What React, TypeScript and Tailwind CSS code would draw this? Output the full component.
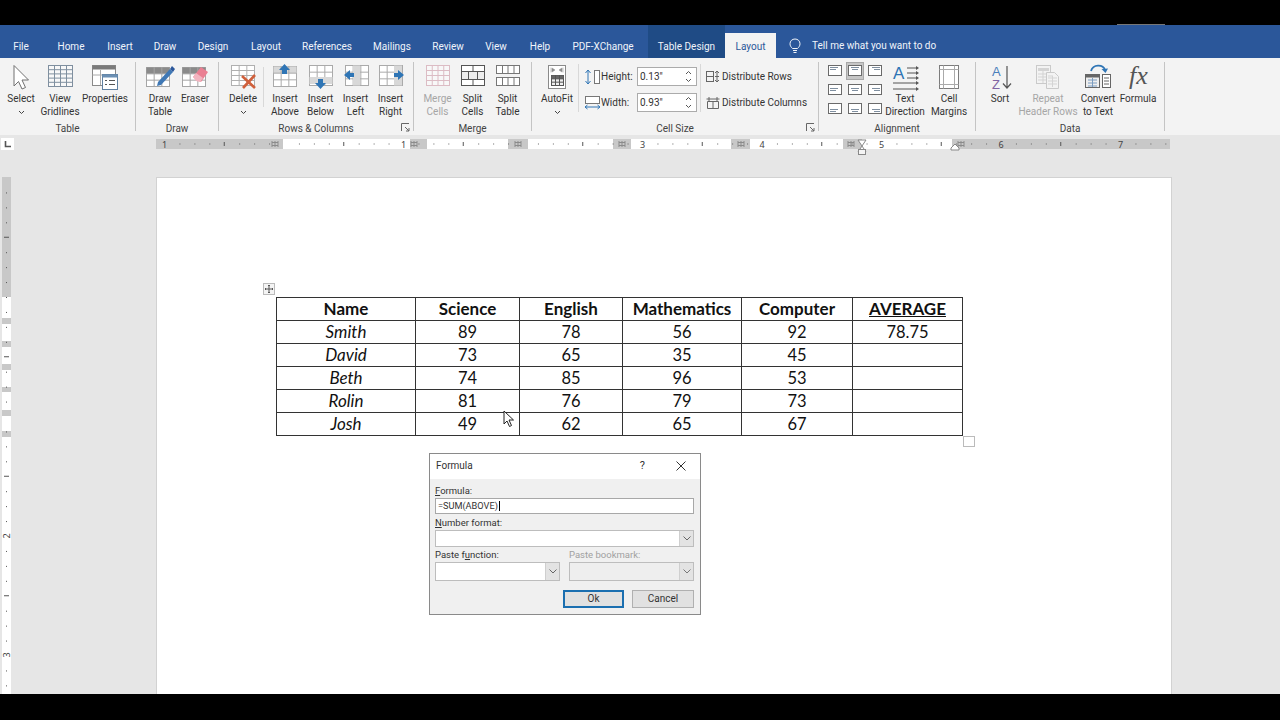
import React from "react";

const UI = { fontFamily: 'Roboto, "Noto Sans", sans-serif' };

function Grid({ x, y, w, h, cols, rows, c = "#7f8a93", fill = "#fff", head }: { x: number; y: number; w: number; h: number; cols: number; rows: number; c?: string; fill?: string; head?: string }) {
  const v = Array.from({ length: cols - 1 }, (_, i) => x + ((i + 1) * w) / cols);
  const hz = Array.from({ length: rows - 1 }, (_, i) => y + ((i + 1) * h) / rows);
  return (
    <g stroke={c} strokeWidth="1" fill="none">
      <rect x={x + 0.5} y={y + 0.5} width={w} height={h} fill={fill} />
      {head && <rect x={x + 0.5} y={y + 0.5} width={w} height={h / rows} fill={head} stroke="none" />}
      {v.map((p) => <path key={p} d={`M${p + 0.5} ${y}v${h}`} />)}
      {hz.map((p) => <path key={p} d={`M${x} ${p + 0.5}h${w}`} />)}
    </g>
  );
}

const Ico = ({ w = 28, h = 28, children }: { w?: number; h?: number; children: React.ReactNode }) => (
  <svg width={w} height={h} viewBox={`0 0 ${w} ${h}`} className="block shrink-0 overflow-visible">{children}</svg>
);

const icons: Record<string, React.ReactNode> = {
  select: <Ico><path d="M7 1.5 L7 22 L11.5 17.5 L15 25 L18.5 23.5 L15 16 L21.5 16 Z" fill="#fff" stroke="#707070" /></Ico>,
  gridlines: <Ico><Grid x={2} y={1} w={24} h={21} cols={4} rows={5} c="#7f8f9f" fill="#f8f8f8" /></Ico>,
  properties: <Ico><g><rect x="1.5" y="1.5" width="23" height="20" fill="#fff" stroke="#8a8a8a" /><rect x="1.5" y="1.5" width="23" height="4" fill="#7a7a7a" /><path d="M1.5 11h12M9.5 6v15" stroke="#aaa" /><rect x="11.5" y="10.5" width="15" height="15" fill="#fff" stroke="#5f7f9f" /><rect x="11.5" y="10.5" width="15" height="3" fill="#6b8fb3" /><path d="M14 16.5h2M18 16.5h6M14 20.5h2M18 20.5h6" stroke="#555" /></g></Ico>,
  draw: <Ico w={30}><Grid x={1} y={3} w={23} h={19} cols={3} rows={3} c="#a5a5a5" head="#8a8a8a" /><path d="M13 18 L25 5 L28 8 L16 21 L12 22 Z" fill="#3f78b5" /><path d="M25 5 L27 2 L30 5 L28 8 Z" fill="#2b579a" /></Ico>,
  eraser: <Ico><Grid x={1} y={3} w={23} h={19} cols={3} rows={3} c="#a5a5a5" head="#8a8a8a" /><path d="M12 13 L20 3 L27 8 L20 18 Z" fill="#ea7f92" /><path d="M12 13 L15 9 L22 14 L19 18 L15 17 Z" fill="#f2b4bf" /></Ico>,
  delete: <Ico><Grid x={2} y={1} w={23} h={20} cols={3} rows={4} c="#b0b0b0" /><path d="M13 12 L26 24 M26 11 L14 24" stroke="#d0603c" strokeWidth="2.6" /></Ico>,
  above: <Ico><Grid x={2} y={2} w={23} h={20} cols={3} rows={3} c="#aaaaaa" head="#d8d8d8" /><path d="M13.5 0 L19 6 H16 V10 H11 V6 H8 Z" fill="#2f75b5" /></Ico>,
  below: <Ico><Grid x={2} y={1} w={23} h={20} cols={3} rows={3} c="#aaaaaa" /><rect x="2.5" y="13" width="23" height="7" fill="#d8d8d8" /><path d="M13.5 25 L19 19 H16 V15 H11 V19 H8 Z" fill="#2f75b5" /></Ico>,
  left: <Ico><Grid x={3} y={1} w={23} h={20} cols={3} rows={3} c="#aaaaaa" /><rect x="11" y="1.5" width="7" height="20" fill="#d8d8d8" /><path d="M2 11 L8 6 V9 H12 V13 H8 V16 Z" fill="#2f75b5" /></Ico>,
  right: <Ico><Grid x={2} y={1} w={23} h={20} cols={3} rows={3} c="#aaaaaa" /><rect x="17" y="1.5" width="8" height="20" fill="#d8d8d8" /><path d="M27 11 L21 6 V9 H17 V13 H21 V16 Z" fill="#2f75b5" /></Ico>,
  merge: <Ico><Grid x={2} y={1} w={23} h={20} cols={4} rows={4} c="#dcbcc4" fill="#f8f8f8" /></Ico>,
  splitC: <Ico><rect x="2.5" y="1.5" width="23" height="20" fill="#fff" stroke="#555" /><rect x="3" y="8" width="22" height="7" fill="#ededed" /><path d="M2.5 7.5h23M2.5 15.5h23M9.5 8v7M18.5 8v7M14 1.5v6M14 16v5" stroke="#555" /></Ico>,
  splitT: <Ico><g stroke="#777" fill="#fff"><rect x="2.5" y="1.5" width="23" height="8" /><rect x="2.5" y="13.5" width="23" height="8" /><path d="M8.5 2v7M14 2v7M20 2v7M8.5 14v7M14 14v7M20 14v7" fill="none" /></g></Ico>,
  autofit: <Ico w={20} h={26}><rect x="1.5" y="1.5" width="17" height="23" fill="#fff" stroke="#8a8a8a" /><path d="M5 4l3 2-3 2zM15 4l-3 2 3 2zM4 3.5v5M16 3.5v5" fill="#888" stroke="#999" strokeWidth=".6" /><Grid x={4} y={11} w={12} h={10} cols={3} rows={3} c="#555" head="#666" fill="#eee" /></Ico>,
  direction: <Ico w={30} h={28}><text x="3" y="15" fontSize="17" fill="#2e74b5" fontFamily="Liberation Sans, sans-serif">A</text><path d="M17 4h10M17 9h10M17 14h10M3 19h24M3 25h24" stroke="#555" /><path d="M26 2l3 2-3 2zM26 7l3 2-3 2zM26 12l3 2-3 2zM26 17l3 2-3 2zM26 23l3 2-3 2z" fill="#555" /></Ico>,
  margins: <Ico w={22} h={26}><rect x="1.5" y="1.5" width="19" height="23" fill="#fff" stroke="#7c7c7c" /><path d="M5.5 1.5v23M16.5 1.5v23M1.5 5.5h19M1.5 20.5h19" stroke="#aaa" /></Ico>,
  sort: <Ico w={24} h={28}><text x="4" y="12" fontSize="13" fontWeight="400" fill="#4a7ebb" fontFamily="Liberation Sans, sans-serif">A</text><text x="4" y="25" fontSize="13" fontWeight="400" fill="#8064a2" fontFamily="Liberation Sans, sans-serif">Z</text><path d="M19 2v22M15 19.5l4 4.5 4-4.5" stroke="#555" strokeWidth="1.2" fill="none" /></Ico>,
  repeat: <Ico h={26}><g opacity=".55"><rect x="2.5" y="1.5" width="14" height="18" fill="#f4f4f4" stroke="#aaa" /><rect x="4" y="4" width="11" height="3" fill="#bbb" /><path d="M4 10h10M4 13h10M4 16h10M9 7v12" stroke="#bbb" /><path d="M12.5 8.5h8l4 4v12h-12z" fill="#f4f4f4" stroke="#aaa" /><path d="M14 14h9M14 17h9M14 20h9M18.5 12v11M14 12h5" stroke="#bbb" /></g></Ico>,
  convert: <Ico w={28}><rect x="1.5" y="10.5" width="14" height="13" fill="#eee" stroke="#666" /><rect x="1.5" y="10.5" width="14" height="3" fill="#666" /><path d="M4 16h9M4 19h9M4 22h9M8.5 14v9" stroke="#7a9cc0" /><rect x="18.5" y="10.5" width="8" height="13" fill="#fff" stroke="#666" /><path d="M20 14h5M20 17h5M20 20h5" stroke="#666" /><path d="M7 7 C9 0 19 0 21 6" fill="none" stroke="#2f75b5" strokeWidth="1.8" /><path d="M17.5 5 L21.5 9 L24 4.5 Z" fill="#2f75b5" /></Ico>,
  fx: <Ico w={30} h={28}><text x="6" y="20" fontSize="26" fontStyle="italic" fill="#555" fontFamily="Liberation Serif, serif">fx</text></Ico>,
};

const Chevron = () => (
  <svg width="7" height="5" viewBox="0 0 7 5" className="mt-[5px]"><path d="M1 1l2.5 2.5L6 1" fill="none" stroke="#444" /></svg>
);

function Btn({ w, icon, lines, chevron, off }: { w: number; icon: string; lines: string[]; chevron?: boolean; off?: boolean }) {
  return (
    <div className={`flex shrink-0 flex-col items-center pt-[6px] text-[10px] leading-[13px] ${off ? "text-[#a6a6a6]" : "text-[#333]"}`} style={{ width: w }}>
      <div className="flex h-[28px] items-start justify-center">{icons[icon]}</div>
      {lines.map((l) => <div key={l} className="whitespace-nowrap">{l}</div>)}
      {chevron && <Chevron />}
    </div>
  );
}

const Launcher = () => (
  <svg width="9" height="9" viewBox="0 0 9 9" className="absolute bottom-[3px] right-[4px]"><path d="M.5 8V.5H8M4 4l4 4M8 5v3H5" fill="none" stroke="#666" /></svg>
);

function Group({ w, pad = 0, label, launcher, children }: { w: number; pad?: number; label: string; launcher?: boolean; children: React.ReactNode }) {
  return (
    <div className="relative flex h-full shrink-0" style={{ width: w }}>
      <div className="flex min-w-0 flex-1 flex-col">
        <div className="flex h-[64px]" style={{ paddingLeft: pad }}>{children}</div>
        <div className="h-[13px] text-center text-[10px] leading-[13px] text-[#444]">{label}</div>
      </div>
      {launcher && <Launcher />}
      <div className="mt-[4px] h-[69px] w-px shrink-0 bg-[#c4c4c4]" />
    </div>
  );
}

function Spin({ value }: { value: string }) {
  return (
    <div className="flex h-[19px] w-[60px] items-center justify-between border border-[#ababab] bg-white pl-[2px] pr-[4px] text-[10px] text-[#333]">
      <span>{value}</span>
      <svg width="7" height="13" viewBox="0 0 7 13"><path d="M1 4l2.5-2.5L6 4M1 9l2.5 2.5L6 9" fill="none" stroke="#555" /></svg>
    </div>
  );
}

function AlignCell({ on, r, c }: { on?: boolean; r: number; c: number }) {
  const top = [2.5, 4.5, 6.5][r];
  const x = [2, 3, 4][c];
  const x2 = [2, 4, 6][c];
  return (
    <div className={`flex h-[18px] w-[18px] items-center justify-center ${on ? "border border-[#a8a8a8] bg-[#c6c6c6]" : ""}`}>
      <svg width="14" height="11" viewBox="0 0 14 11">
        <rect x=".5" y=".5" width="13" height="10" fill="#fff" stroke="#6a6a6a" />
        <path d={`M${x} ${top}h8M${x2} ${top + 2}h6`} stroke="#7f8fa0" />
      </svg>
    </div>
  );
}

function HRuler() {
  const gray = [[156, 283], [410, 427], [508, 528], [613, 631], [731, 750], [843, 862], [952, 1170]];
  const marks = [275, 414, 518, 622, 741, 851, 961];
  const o = 284, s = 119.5 / 8, x0 = 156;
  const ticks = [];
  for (let i = -8; i < 60; i++) {
    const x = o + i * s;
    if (x < 160 || x > 1166 || i % 8 === 0) continue;
    ticks.push(i % 4 === 0
      ? <path key={i} d={`M${x - x0} 3v4`} stroke="#555" />
      : <rect key={i} x={x - x0} y="4.5" width="1" height="1" fill="#666" />);
  }
  const nums = [[1, -1], [1, 1], [3, 3], [4, 4], [5, 5], [6, 6], [7, 7]];
  return (
    <svg width="1016" height="18" viewBox="0 0 1016 18" className="absolute left-[156px] top-[4px]">
      <rect width="1014" height="10" fill="#fff" />
      {gray.map(([a, b]) => <rect key={a} x={a - x0} width={b - a} height="10" fill="#c8c8c8" />)}
      {ticks}
      {nums.map(([n, k]) => <text key={k} x={o + k * 119.5 - x0} y="8.5" textAnchor="middle" fontSize="9" fill="#444" fontFamily="Noto Sans, sans-serif">{n}</text>)}
      {marks.map((m) => <g key={m} stroke="#8b8b8b"><path d={`M${m - x0 - 3} 2v6M${m - x0} 2v6M${m - x0 + 3} 2v6M${m - x0 - 3} 3.5h6M${m - x0 - 3} 6.5h6`} /></g>)}
      <path d="M702 1h8l-4 6 4 6h-8l4-6z" fill="#fff" stroke="#888" />
      <rect x="702.5" y="10.5" width="7" height="5" fill="#f4f4f4" stroke="#888" />
      <path d="M795 9l4-4 4 4v2h-8z" fill="#fff" stroke="#888" />
    </svg>
  );
}

function VRuler() {
  const gray = [[177, 297], [318, 324], [341, 347], [364, 370], [387, 392], [410, 416], [431, 437]];
  const o = 297, s = 119.5 / 8, y0 = 177;
  const ticks = [];
  for (let i = -7; i < 27; i++) {
    const y = o + i * s;
    if (i % 8 === 0 && i > 0) continue;
    ticks.push(i % 4 === 0 && i !== 0
      ? <path key={i} d={`M2 ${y - y0}h5`} stroke="#555" />
      : <rect key={i} x="4" y={y - y0} width="1" height="1" fill="#555" />);
  }
  return (
    <svg width="9" height="517" viewBox="0 0 9 517" className="ml-[2px] mt-[2px] shrink-0 overflow-visible">
      <rect width="9" height="517" fill="#fff" />
      {gray.map(([a, b]) => <rect key={a} y={a - y0} width="9" height={b - a} fill="#c8c8c8" />)}
      {ticks}
      {[[2, 536], [3, 655]].map(([n, y]) => <text key={n} x="0" y="0" transform={`translate(8 ${y - y0}) rotate(-90)`} textAnchor="middle" fontSize="9" fill="#444" fontFamily="Noto Sans, sans-serif">{n}</text>)}
    </svg>
  );
}

const head = ["Name", "Science", "English", "Mathematics", "Computer", "AVERAGE"];
const data: [string, string, string, string, string, string][] = [
  ["Smith", "89", "78", "56", "92", "78.75"],
  ["David", "73", "65", "35", "45", ""],
  ["Beth", "74", "85", "96", "53", ""],
  ["Rolin", "81", "76", "79", "73", ""],
  ["Josh", "49", "62", "65", "67", ""],
];
const widths = [139, 104, 103, 119, 111, 110];

const DropArrow = ({ off }: { off?: boolean }) => (
  <div className="flex h-full w-[14px] items-center justify-center border-l border-[#cfcfcf] bg-[#e3e3e3]">
    <svg width="8" height="5" viewBox="0 0 8 5"><path d="M.5.5L4 4 7.5.5" fill="none" stroke={off ? "#777" : "#666"} /></svg>
  </div>
);

function Dialog() {
  return (
    <div className="absolute left-[272px] top-[275px] flex h-[162px] w-[272px] flex-col border border-[#8a8a8a] bg-[#f0f0f0] text-[9.5px] leading-[12px] text-[#333] shadow-[0_0_0_1px_#fff]">
      <div className="flex h-[25px] items-center bg-white pb-[1px] pl-[6px] text-[10px]">
        <span className="flex-1">Formula</span>
        <span className="mr-[31px] text-[11px]">?</span>
        <svg width="10" height="10" viewBox="0 0 10 10" className="mr-[14px]"><path d="M.5.5l9 9M9.5.5l-9 9" stroke="#333" /></svg>
      </div>
      <div className="flex flex-col px-[5px] pt-[6px]">
        <div><u>F</u>ormula:</div>
        <div className="mt-[1px] flex h-[16px] w-[259px] items-center border border-[#a8a8a8] bg-white pl-[2px] text-[9.2px]">=SUM(ABOVE)<span className="ml-px inline-block h-[10px] w-px bg-black" /></div>
        <div className="mt-[3px]"><u>N</u>umber format:</div>
        <div className="mt-[1px] flex h-[17px] w-[259px] justify-end border border-[#bdbdbd] bg-white"><DropArrow /></div>
        <div className="mt-[2px] flex w-[259px] justify-between">
          <div className="flex w-[125px] flex-col">
            <div>Paste f<u>u</u>nction:</div>
            <div className="mt-[1px] flex h-[19px] justify-end border border-[#bdbdbd] bg-white"><DropArrow /></div>
          </div>
          <div className="flex w-[125px] flex-col text-[#a0a0a0]">
            <div>Paste bookmark:</div>
            <div className="mt-[1px] flex h-[19px] justify-end border border-[#bdbdbd] bg-[#eeeeee]"><DropArrow off /></div>
          </div>
        </div>
        <div className="mt-[9px] flex w-[259px] justify-end gap-[8px] text-[10px]">
          <div className="flex h-[18px] w-[61px] items-center justify-center border-2 border-[#1b6fb0] bg-[#e1e1e1]">Ok</div>
          <div className="flex h-[18px] w-[62px] items-center justify-center border border-[#b0b0b0] bg-[#e1e1e1]">Cancel</div>
        </div>
      </div>
    </div>
  );
}

const tabs: [string, number][] = [["File", 42], ["Home", 58], ["Insert", 40], ["Draw", 50], ["Design", 46], ["Layout", 60], ["References", 62], ["Mailings", 68], ["Review", 44], ["View", 52], ["Help", 36], ["PDF-XChange", 90]];

export default function App() {
  return (
    <div className="flex h-[720px] w-[1280px] flex-col overflow-hidden bg-black" style={UI}>
      <div className="flex h-[25px] shrink-0 items-end">
        <div className="w-[1117px]" />
        <div className="h-px w-[48px] bg-[#777]" />
      </div>

      <div className="flex h-[33px] shrink-0 items-end bg-[#2b579a] text-[10px] text-[#f0f4fa]">
        {tabs.map(([t, w]) => (
          <div key={t + w} className="flex h-[25px] shrink-0 items-center justify-center pt-[1px]" style={{ width: w }}>{t}</div>
        ))}
        <div className="flex h-[33px] w-[77px] shrink-0 items-center justify-center bg-[#1f4b85] pt-[9px]">Table Design</div>
        <div className="flex h-[25px] w-[51px] shrink-0 items-center justify-center bg-[#f3f3f3] pt-[1px] text-[#2b579a]">Layout</div>
        <div className="ml-[13px] flex h-[25px] shrink-0 items-center">
          <svg width="12" height="15" viewBox="0 0 12 15"><path d="M3.5 10.5C2 9 1 7.8 1 5.8 1 3 3.2 1 6 1s5 2 5 4.8c0 2-1 3.2-2.5 4.7zM4 12.5h4M4.5 14.5h3" fill="none" stroke="#f0f4fa" /></svg>
          <span className="ml-[11px]">Tell me what you want to do</span>
        </div>
      </div>

      <div className="flex h-[77px] shrink-0 bg-[#f3f3f3]">
        <Group w={136} pad={3} label="Table">
          <Btn w={36} icon="select" lines={["Select"]} chevron />
          <Btn w={42} icon="gridlines" lines={["View", "Gridlines"]} />
          <Btn w={48} icon="properties" lines={["Properties"]} />
        </Group>
        <Group w={83} pad={6} label="Draw">
          <Btn w={36} icon="draw" lines={["Draw", "Table"]} />
          <Btn w={34} icon="eraser" lines={["Eraser"]} />
        </Group>
        <Group w={195} pad={4} label="Rows & Columns" launcher>
          <Btn w={40} icon="delete" lines={["Delete"]} chevron />
          <div className="my-[9px] mr-[3px] h-[40px] w-px bg-[#d8d8d8]" />
          <Btn w={36} icon="above" lines={["Insert", "Above"]} />
          <Btn w={35} icon="below" lines={["Insert", "Below"]} />
          <Btn w={35} icon="left" lines={["Insert", "Left"]} />
          <Btn w={35} icon="right" lines={["Insert", "Right"]} />
        </Group>
        <Group w={118} pad={6} label="Merge">
          <Btn w={35} icon="merge" lines={["Merge", "Cells"]} off />
          <Btn w={35} icon="splitC" lines={["Split", "Cells"]} />
          <Btn w={35} icon="splitT" lines={["Split", "Table"]} />
        </Group>
        <Group w={287} pad={5} label="Cell Size" launcher>
          <Btn w={40} icon="autofit" lines={["AutoFit"]} chevron />
          <div className="mx-[1px] mt-[6px] h-[48px] w-px bg-[#d8d8d8]" />
          <div className="ml-[4px] flex w-[113px] shrink-0 flex-col gap-[7px] pt-[9px] text-[10px] text-[#333]">
            <div className="flex h-[19px] items-center">
              <svg width="17" height="16" viewBox="0 0 17 16"><path d="M4 1v14M1.5 4L4 1l2.5 3M1.5 12L4 15l2.5-3" fill="none" stroke="#2f75b5" /><rect x="10.5" y="1.5" width="5" height="13" fill="#fff" stroke="#777" /></svg>
              <span className="w-[36px]">Height:</span>
              <Spin value={'0.13"'} />
            </div>
            <div className="flex h-[19px] items-center">
              <svg width="17" height="16" viewBox="0 0 17 16"><rect x="1.5" y="1.5" width="14" height="7" fill="#fff" stroke="#777" /><path d="M1 12h15M3.5 10L1 12l2.5 2M13.5 10l2.5 2-2.5 2" fill="none" stroke="#2f75b5" /></svg>
              <span className="w-[36px]">Width:</span>
              <Spin value={'0.93"'} />
            </div>
          </div>
          <div className="ml-[3px] mt-[6px] h-[48px] w-px bg-[#d8d8d8]" />
          <div className="ml-[5px] flex flex-col gap-[7px] pt-[9px] text-[10px] whitespace-nowrap text-[#333]">
            <div className="flex h-[19px] items-center gap-[2px]">
              <svg width="14" height="13" viewBox="0 0 14 13"><rect x=".5" y="1.5" width="7" height="10" fill="none" stroke="#666" /><path d="M.5 6.5h7M11 1v11M9 3l2-2 2 2M9 10l2 2 2-2M9 6.5h4" fill="none" stroke="#666" /></svg>
              <span>Distribute Rows</span>
            </div>
            <div className="flex h-[19px] items-center gap-[2px]">
              <svg width="14" height="13" viewBox="0 0 14 13"><path d="M1.5 5.5h11v7h-11zM7 5.5v7M.5 3h13M3 1v4M11 1v4" fill="none" stroke="#666" /></svg>
              <span>Distribute Columns</span>
            </div>
          </div>
        </Group>
        <Group w={157} pad={6} label="Alignment">
          <div className="mt-[3px] grid h-[57px] w-[60px] shrink-0 grid-cols-[20px_20px_20px] grid-rows-[19px_19px_19px] place-items-center">
            {[0, 1, 2].map((r) => [0, 1, 2].map((c) => <AlignCell key={`${r}${c}`} on={r === 0 && c === 1} r={r} c={c} />))}
          </div>
          <div className="w-[1px]" />
          <Btn w={38} icon="direction" lines={["Text", "Direction"]} />
          <div className="w-[4px]" />
          <Btn w={42} icon="margins" lines={["Cell", "Margins"]} />
        </Group>
        <Group w={189} pad={4} label="Data">
          <Btn w={40} icon="sort" lines={["Sort"]} />
          <Btn w={56} icon="repeat" lines={["Repeat", "Header Rows"]} off />
          <Btn w={44} icon="convert" lines={["Convert", "to Text"]} />
          <Btn w={36} icon="fx" lines={["Formula"]} />
        </Group>
      </div>

      <div className="relative flex min-h-0 flex-1 flex-col bg-[#e6e6e6]">
        <div className="relative h-[40px] shrink-0">
          <div className="ml-[1px] mt-[3px] flex h-[12px] w-[13px] items-center justify-center bg-white">
            <svg width="7" height="7" viewBox="0 0 7 7"><path d="M1.5 0v5.5H7" fill="none" stroke="#555" strokeWidth="1.6" /></svg>
          </div>
          <HRuler />
        </div>
        <div className="flex min-h-0 flex-1">
          <VRuler />
          <div className="relative ml-[145px] mt-[2px] w-[1016px] shrink-0 border border-b-0 border-[#d2d2d2] bg-white pl-[119px] pt-[119px]">
            <div className="relative w-fit" style={{ fontFamily: 'Lato, "Noto Sans", sans-serif' }}>
              <svg width="12" height="12" viewBox="0 0 12 12" className="absolute -left-[13px] -top-[14px]">
                <rect x=".5" y=".5" width="11" height="11" fill="#f4f4f4" stroke="#bbb" />
                <path d="M6 2v8M2 6h8M5 3l1-1 1 1M5 9l1 1 1-1M3 5L2 6l1 1M9 5l1 1-1 1" fill="none" stroke="#555" />
              </svg>
              <table className="table-fixed border-collapse text-[17px] text-[#111]">
                <colgroup>{widths.map((w, i) => <col key={i} style={{ width: w }} />)}</colgroup>
                <thead>
                  <tr className="h-[23px] font-bold">
                    {head.map((h) => <th key={h} className={`border border-[#333] p-0 text-center font-bold leading-[20px] ${h === "AVERAGE" ? "underline" : ""}`}>{h}</th>)}
                  </tr>
                </thead>
                <tbody>
                  {data.map((r) => (
                    <tr key={r[0]} className="h-[23px]">
                      {r.map((c, i) => <td key={i} className={`border border-[#333] p-0 text-center leading-[20px] ${i === 0 ? "italic" : "text-[16.5px]"}`}>{c}</td>)}
                    </tr>
                  ))}
                </tbody>
              </table>
              <div className="absolute -bottom-[11px] -right-[12px] h-[11px] w-[12px] border border-[#bbb] bg-white" />
              <svg width="12" height="18" viewBox="0 0 12 18" className="absolute left-[227px] top-[113px]">
                <path d="M1 1v13l3-3 2.5 5.5 2-1L6 10h4.5z" fill="#fff" stroke="#222" />
              </svg>
            </div>
            <Dialog />
          </div>
        </div>
      </div>
      <div className="h-[26px] shrink-0 bg-black" />
    </div>
  );
}
